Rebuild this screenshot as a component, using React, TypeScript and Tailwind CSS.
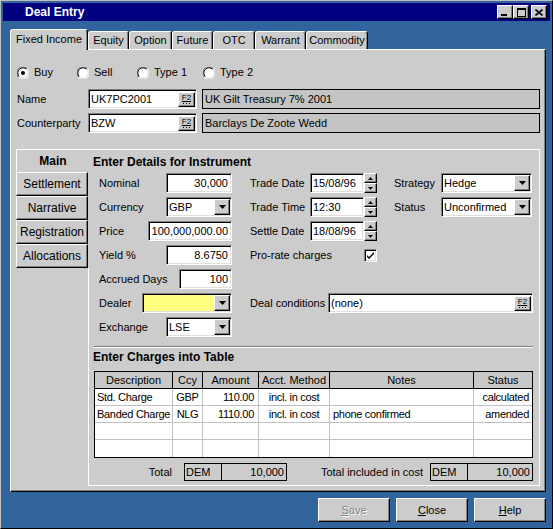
import React from 'react';

const raised =
  'border border-t-white border-l-white border-r-black border-b-black shadow-[inset_-1px_-1px_0_#808080]';
const sunken =
  'border border-t-[#808080] border-l-[#808080] border-r-white border-b-white shadow-[inset_1px_1px_0_#000,inset_-1px_-1px_0_#dfdfdf]';

function DownArrow() {
  return (
    <svg width="7" height="4" viewBox="0 0 7 4">
      <path d="M0 0h7L3.5 4z" fill="#000" />
    </svg>
  );
}

function F2Button() {
  return (
    <div
      className={`w-[17px] h-[15px] ${raised} bg-[#cccccc] flex flex-col items-center justify-center gap-[1px]`}
    >
      <span className="text-[8px] leading-[8px] underline">F2</span>
      <svg width="7" height="1" viewBox="0 0 7 1">
        <rect x="0" y="0" width="1" height="1" fill="#000" />
        <rect x="3" y="0" width="1" height="1" fill="#000" />
        <rect x="6" y="0" width="1" height="1" fill="#000" />
      </svg>
    </div>
  );
}

function TextBox({
  className = '',
  value,
  right = false,
  f2 = false,
}: {
  className?: string;
  value: string;
  right?: boolean;
  f2?: boolean;
}) {
  return (
    <div className={`h-[20px] ${sunken} bg-white flex items-center p-[1px] ${className}`}>
      <span
        className={`flex-1 whitespace-nowrap overflow-hidden ${right ? 'text-right pr-[2px]' : 'pl-[1px]'}`}
      >
        {value}
      </span>
      {f2 && <F2Button />}
    </div>
  );
}

function Select({ className = '', value, bg = 'bg-white' }: { className?: string; value: string; bg?: string }) {
  return (
    <div className={`h-[20px] ${sunken} ${bg} flex items-stretch p-[1px] ${className}`}>
      <span className="flex-1 pl-[1px] leading-[16px] whitespace-nowrap">{value}</span>
      <div className={`w-[16px] ${raised} bg-[#cccccc] flex items-center justify-center`}>
        <DownArrow />
      </div>
    </div>
  );
}

function Spin() {
  return (
    <div className="w-[13px] h-[20px] flex flex-col">
      <div className={`h-[10px] ${raised} bg-[#cccccc] flex items-center justify-center`}>
        <svg width="5" height="3" viewBox="0 0 5 3">
          <path d="M2.5 0L5 3H0z" fill="#000" />
        </svg>
      </div>
      <div className={`h-[10px] ${raised} bg-[#cccccc] flex items-center justify-center`}>
        <svg width="5" height="3" viewBox="0 0 5 3">
          <path d="M0 0h5L2.5 3z" fill="#000" />
        </svg>
      </div>
    </div>
  );
}

function Radio({ label, checked = false, className = '' }: { label: string; checked?: boolean; className?: string }) {
  return (
    <div className={`flex items-center gap-[5px] ${className}`}>
      <svg width="12" height="12" viewBox="0 0 12 12">
        <circle cx="6" cy="6" r="5.5" fill="#fff" />
        <path d="M1.5 10.5A6 6 0 0 1 10.5 1.5" stroke="#808080" strokeWidth="1" fill="none" />
        <path d="M2.3 9.7A5 5 0 0 1 9.7 2.3" stroke="#000" strokeWidth="1" fill="none" />
        <path d="M10.5 1.5A6 6 0 0 1 1.5 10.5" stroke="#fff" strokeWidth="1" fill="none" />
        <path d="M9.7 2.3A5 5 0 0 1 2.3 9.7" stroke="#dfdfdf" strokeWidth="1" fill="none" />
        {checked && <circle cx="6" cy="6" r="2" fill="#000" />}
      </svg>
      <span>{label}</span>
    </div>
  );
}

function Checkbox() {
  return (
    <div className={`w-[13px] h-[13px] ${sunken} bg-white flex items-center justify-center`}>
      <svg width="7" height="7" viewBox="0 0 7 7">
        <path d="M0 3l2 2 5-5v2L2 7 0 5z" fill="#000" />
      </svg>
    </div>
  );
}

function TitleBar() {
  return (
    <div className="h-[18px] bg-[#000080] flex items-center pl-[22px] pr-[3px]">
      <span className="flex-1 text-white font-bold text-[12px]">Deal Entry</span>
      <div className="flex">
        <div className={`w-[16px] h-[14px] ${raised} bg-[#cccccc] flex items-end pl-[3px] pb-[2px]`}>
          <div className="w-[6px] h-[2px] bg-black" />
        </div>
        <div className={`w-[16px] h-[14px] ${raised} bg-[#cccccc] flex items-center justify-center`}>
          <div className="w-[9px] h-[9px] border border-black border-t-2" />
        </div>
        <div className={`ml-[2px] w-[16px] h-[14px] ${raised} bg-[#cccccc] flex items-center justify-center`}>
          <svg width="8" height="7" viewBox="0 0 8 7">
            <path d="M0.5 0.5L7.5 6.5M7.5 0.5L0.5 6.5" stroke="#000" strokeWidth="1.6" />
          </svg>
        </div>
      </div>
    </div>
  );
}

const tabs = [
  { label: 'Equity', w: 'w-[41px]' },
  { label: 'Option', w: 'w-[43px]' },
  { label: 'Future', w: 'w-[41px]' },
  { label: 'OTC', w: 'w-[42px]' },
  { label: 'Warrant', w: 'w-[51px]' },
  { label: 'Commodity', w: 'w-[62px]' },
];

function Tabs() {
  return (
    <div className="h-[20px] flex items-end">
      <div className="relative z-10 w-[78px] h-[21px] -mb-px bg-[#cccccc] border-t border-l border-white border-r border-r-black shadow-[inset_-1px_0_0_#808080] rounded-t-[3px] flex items-center justify-center pb-[2px]">
        Fixed Income
      </div>
      {tabs.map((t) => (
        <div
          key={t.label}
          className={`${t.w} h-[18px] bg-[#cccccc] border-t border-l border-white border-r border-r-black shadow-[inset_-1px_0_0_#808080] rounded-t-[3px] flex items-center justify-center`}
        >
          {t.label}
        </div>
      ))}
    </div>
  );
}

function Row({ label, children }: { label: string; children: React.ReactNode }) {
  return (
    <div className="h-[20px] flex items-center">
      <span className="flex-1 whitespace-nowrap">{label}</span>
      {children}
    </div>
  );
}

const columns = [
  { w: 'w-[78px]', head: 'Description', cell: 'text-left pl-[2px]' },
  { w: 'w-[30px]', head: 'Ccy', cell: 'text-center' },
  { w: 'w-[56px]', head: 'Amount', cell: 'text-right pr-[4px]' },
  { w: 'w-[71px]', head: 'Acct. Method', cell: 'text-center' },
  { w: 'w-[144px]', head: 'Notes', cell: 'text-left pl-[3px]' },
  { w: 'w-[58px]', head: 'Status', cell: 'text-right pr-[3px]' },
];

const charges = [
  ['Std. Charge', 'GBP', '110.00', 'incl. in cost', '', 'calculated'],
  ['Banded Charge', 'NLG', '1110.00', 'incl. in cost', 'phone confirmed', 'amended'],
  ['', '', '', '', '', ''],
  ['', '', '', '', '', ''],
];

function ChargesTable() {
  return (
    <div className="w-[439px] border border-black bg-white">
      <div className="h-[17px] flex bg-[#c8c8c8] border-b border-black">
        {columns.map((c, i) => (
          <div
            key={c.head}
            className={`${c.w} flex items-center justify-center ${i < columns.length - 1 ? 'border-r border-black' : ''}`}
          >
            {c.head}
          </div>
        ))}
      </div>
      {charges.map((r, ri) => (
        <div key={ri} className={`h-[17px] flex ${ri < charges.length - 1 ? 'border-b border-[#c0c0c0]' : ''}`}>
          {r.map((v, i) => (
            <div
              key={i}
              className={`${columns[i].w} leading-[16px] tracking-[-0.3px] whitespace-nowrap overflow-hidden ${columns[i].cell} ${i < columns.length - 1 ? 'border-r border-[#c0c0c0]' : ''}`}
            >
              {v}
            </div>
          ))}
        </div>
      ))}
    </div>
  );
}

function TotalBox({ ccy, value }: { ccy: string; value: string }) {
  return (
    <div className="w-[103px] h-[18px] border border-black flex">
      <div className="w-[37px] border-r border-black pl-[1px] leading-[16px]">{ccy}</div>
      <div className="flex-1 text-right pr-[2px] leading-[16px]">{value}</div>
    </div>
  );
}

function SideButton({ label }: { label: string }) {
  return (
    <div className={`w-[72px] h-[24px] ${raised} bg-[#cccccc] flex items-center justify-center text-[12px]`}>
      {label}
    </div>
  );
}

function DialogButton({ first, rest, disabled = false }: { first: string; rest: string; disabled?: boolean }) {
  return (
    <div
      className={`w-[72px] h-[24px] ${raised} bg-[#cccccc] flex items-center justify-center ${
        disabled ? 'text-[#808080] [text-shadow:1px_1px_0_#fff]' : ''
      }`}
    >
      <span>
        <span className="underline">{first}</span>
        {rest}
      </span>
    </div>
  );
}

export default function App() {
  return (
    <div className="w-[553px] h-[529px] bg-[#31639c] border border-t-[#c0c0c0] border-l-[#c0c0c0] border-r-black border-b-black p-[2px] flex flex-col font-['Liberation_Sans',Arial,sans-serif] text-[11px] text-black overflow-hidden select-none">
      <TitleBar />

      <div className="mt-[8px] ml-[7px] mr-[4px] flex flex-col">
        <Tabs />
        <div className="h-[443px] bg-[#cccccc] border border-t-white border-l-white border-r-black border-b-black shadow-[inset_-1px_-1px_0_#808080] flex flex-col pl-[5px] pt-[16px]">
          {/* deal type */}
          <div className="h-[13px] flex items-center pl-[1px]">
            <Radio label="Buy" checked className="w-[60px]" />
            <Radio label="Sell" className="w-[60px]" />
            <Radio label="Type 1" className="w-[66px]" />
            <Radio label="Type 2" />
          </div>

          <div className="mt-[10px] h-[20px] flex items-center pl-[1px]">
            <span className="w-[71px]">Name</span>
            <TextBox className="w-[109px]" value="UK7PC2001" f2 />
            <div className="ml-[5px] w-[338px] h-[20px] border border-black bg-[#c4c4c4] pl-[2px] leading-[18px]">
              UK Gilt Treasury 7% 2001
            </div>
          </div>
          <div className="mt-[4px] h-[20px] flex items-center pl-[1px]">
            <span className="w-[71px]">Counterparty</span>
            <TextBox className="w-[109px]" value="BZW" f2 />
            <div className="ml-[5px] w-[338px] h-[20px] border border-black bg-[#c4c4c4] pl-[2px] leading-[18px]">
              Barclays De Zoote Wedd
            </div>
          </div>

          {/* instrument section */}
          <div className="mt-[16px] w-[524px] h-[337px] flex">
            <div className="w-[73px] flex flex-col">
              <div className="h-[23px] border-t border-l border-white flex items-center justify-center font-bold text-[12px]">
                Main
              </div>
              <SideButton label="Settlement" />
              <SideButton label="Narrative" />
              <SideButton label="Registration" />
              <SideButton label="Allocations" />
              <div className="flex-1 border-r border-white" />
            </div>

            <div className="flex-1 border-t border-r border-b border-white flex flex-col">
              <div className="h-[23px] pl-[4px] flex items-center font-bold text-[12px]">
                Enter Details for Instrument
              </div>
              <div className="flex pl-[10px]">
                <div className="w-[133px] flex flex-col gap-[4px]">
                  <Row label="Nominal">
                    <TextBox className="w-[66px]" value="30,000" right />
                  </Row>
                  <Row label="Currency">
                    <Select className="w-[66px]" value="GBP" />
                  </Row>
                  <Row label="Price">
                    <TextBox className="w-[84px]" value="100,000,000.00" right />
                  </Row>
                  <Row label="Yield %">
                    <TextBox className="w-[66px]" value="8.6750" right />
                  </Row>
                  <Row label="Accrued Days">
                    <TextBox className="w-[53px]" value="100" right />
                  </Row>
                  <Row label="Dealer">
                    <Select className="w-[90px]" value="" bg="bg-[#ffff80]" />
                  </Row>
                  <Row label="Exchange">
                    <Select className="w-[66px]" value="LSE" />
                  </Row>
                </div>

                <div className="ml-[18px] flex flex-col">
                  <div className="flex">
                    <div className="w-[127px] flex flex-col gap-[4px]">
                      <Row label="Trade Date">
                        <TextBox className="w-[54px]" value="15/08/96" />
                        <Spin />
                      </Row>
                      <Row label="Trade Time">
                        <TextBox className="w-[54px]" value="12:30" />
                        <Spin />
                      </Row>
                      <Row label="Settle Date">
                        <TextBox className="w-[54px]" value="18/08/96" />
                        <Spin />
                      </Row>
                      <Row label="Pro-rate charges">
                        <Checkbox />
                      </Row>
                    </div>
                    <div className="ml-[17px] w-[138px] flex flex-col gap-[4px]">
                      <Row label="Strategy">
                        <Select className="w-[91px]" value="Hedge" />
                      </Row>
                      <Row label="Status">
                        <Select className="w-[91px]" value="Unconfirmed" />
                      </Row>
                    </div>
                  </div>
                  <div className="mt-[28px] h-[20px] flex items-center">
                    <span className="w-[78px] whitespace-nowrap">Deal conditions</span>
                    <TextBox className="w-[205px]" value="(none)" f2 />
                  </div>
                </div>
              </div>

              <div className="mt-[9px] ml-[5px] mr-[6px] border-t border-[#808080] border-b border-b-white" />
              <div className="h-[18px] ml-[4px] flex items-center font-bold text-[12px]">Enter Charges into Table</div>
              <div className="mt-[5px] ml-[5px]">
                <ChargesTable />
              </div>
              <div className="mt-[5px] ml-[5px] w-[439px] h-[18px] flex items-center">
                <span className="w-[78px] text-right">Total</span>
                <div className="ml-[12px]">
                  <TotalBox ccy="DEM" value="10,000" />
                </div>
                <span className="flex-1 text-right pr-[7px]">Total included in cost</span>
                <TotalBox ccy="DEM" value="10,000" />
              </div>
            </div>
          </div>
        </div>
      </div>

      <div className="mt-[6px] mr-[4px] flex justify-end gap-[6px]">
        <DialogButton first="S" rest="ave" disabled />
        <DialogButton first="C" rest="lose" />
        <DialogButton first="H" rest="elp" />
      </div>
    </div>
  );
}
